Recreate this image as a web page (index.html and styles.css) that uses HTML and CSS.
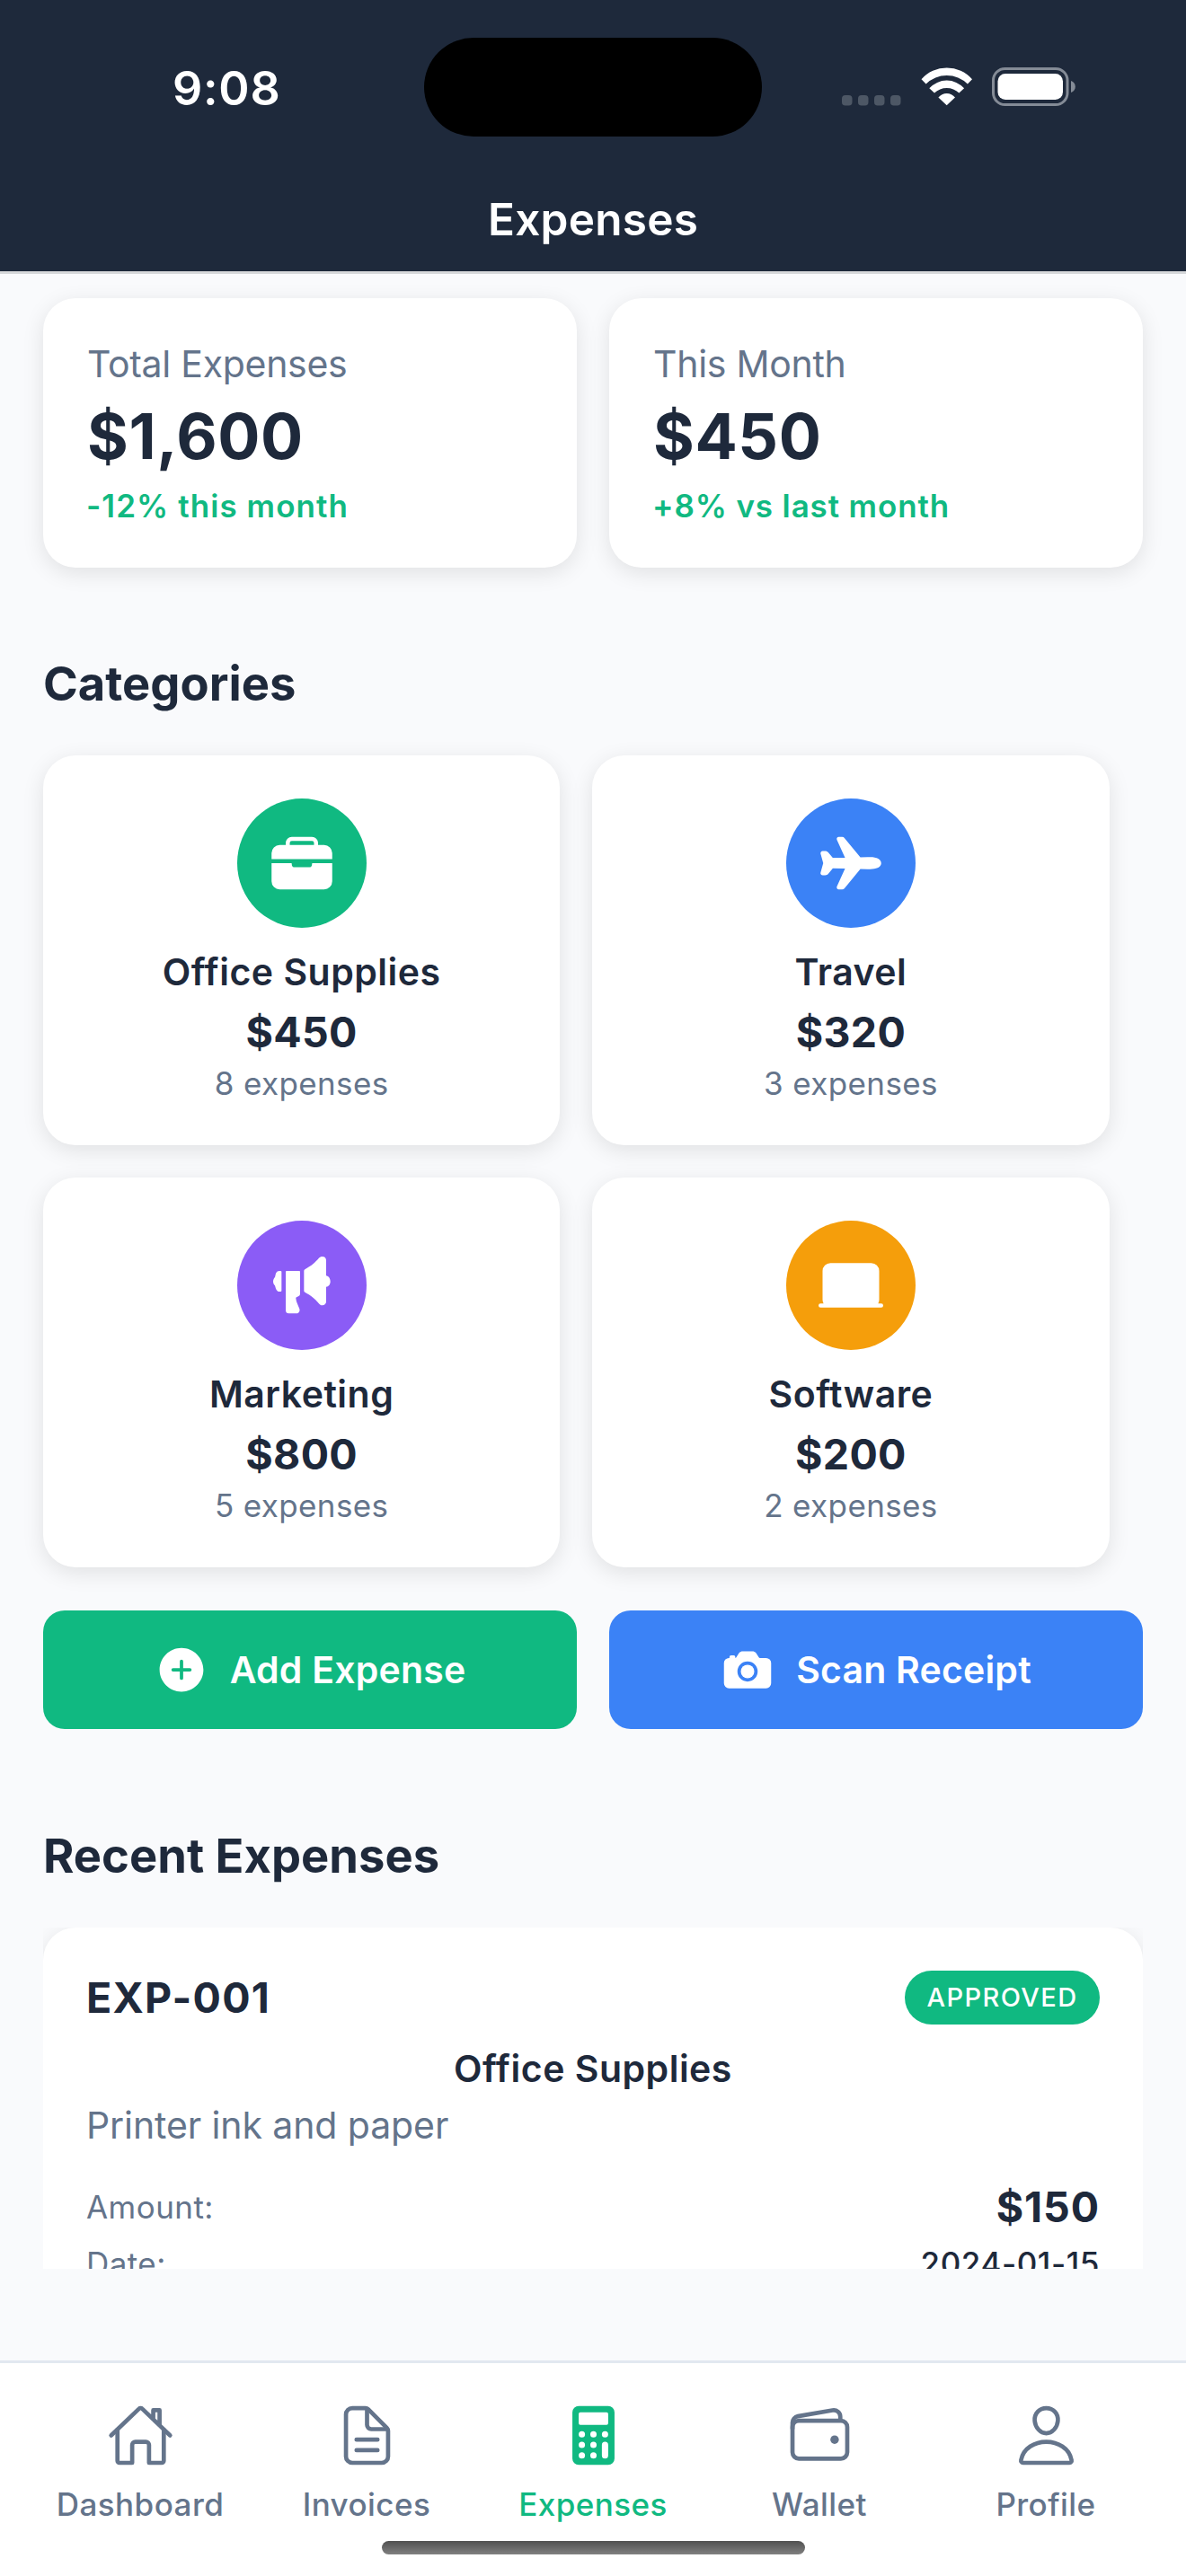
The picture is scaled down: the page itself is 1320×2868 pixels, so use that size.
FILE: index.html
```html
<!DOCTYPE html>
<html lang="en">
<head>
<meta charset="utf-8">
<title>Expenses</title>
<link rel="stylesheet" href="styles.css">
</head>
<body>
<header class="header">
  <div class="status">
    <span class="status-time">9:08</span>
    <span class="island"></span>
    <div class="status-icons">
      <svg class="signal" width="66" height="44" viewBox="0 0 66 44" fill="#4d5765"><rect y="31" width="11.5" height="11.5" rx="3.8"/><rect x="18" y="31" width="11.5" height="11.5" rx="3.8"/><rect x="36" y="31" width="11.5" height="11.5" rx="3.8"/><rect x="54" y="31" width="11.5" height="11.5" rx="3.8"/></svg>
      <svg class="wifi" width="58" height="44" viewBox="0 0 58 44" fill="#fff"><path d="M.5 13.3A37.5 37.5 0 0 1 57 13.3L51.9 18.5A32.8 32.8 0 0 0 5.6 18.5Z"/><path d="M9.3 23.3A26 26 0 0 1 48.1 23.3L42.4 28.6A19.6 19.6 0 0 0 15 28.6Z"/><path d="M19.4 33.6A11.7 11.7 0 0 1 38 33.6L28.7 42.2Z"/></svg>
      <svg class="battery" width="94" height="44" viewBox="0 0 94 44"><rect x="1.5" y="1.5" width="82.5" height="40" rx="13" fill="none" stroke="#848b96" stroke-width="3"/><rect x="6.5" y="7" width="72.5" height="29" rx="8.5" fill="#fff"/><path d="M88 15c3 1 4.8 3.500 4.800 6.500S91 27 88 28z" fill="#848b96"/></svg>
    </div>
  </div>
  <h1 class="header-title">Expenses</h1>
</header>

<main class="content">
  <section class="stats">
    <div class="card stat">
      <div class="stat-label">Total Expenses</div>
      <div class="stat-value">$1,600</div>
      <div class="stat-change">-12% this month</div>
    </div>
    <div class="card stat">
      <div class="stat-label">This Month</div>
      <div class="stat-value">$450</div>
      <div class="stat-change stat-change-up">+8% vs last month</div>
    </div>
  </section>

  <h2 class="section-title">Categories</h2>
  <section class="categories">
    <div class="card category">
      <div class="category-icon green">
        <svg viewBox="0 0 512 512" fill="#fff"><path d="M496 176a64.070 64.070 0 0 0-64-64h-48V96a48.050 48.050 0 0 0-48-48H176a48.050 48.050 0 0 0-48 48v16H80a64.070 64.070 0 0 0-64 64v48h480zm-144-64H160V96a16 16 0 0 1 16-16h160a16 16 0 0 1 16 16zM336 264a24 24 0 0 1-24 24H200a24 24 0 0 1-24-24v-4a4 4 0 0 0-4-4H16v144a64 64 0 0 0 64 64h352a64 64 0 0 0 64-64V256H340a4 4 0 0 0-4 4z"/></svg>
      </div>
      <div class="category-name">Office Supplies</div>
      <div class="category-amount">$450</div>
      <div class="category-count">8 expenses</div>
    </div>
    <div class="card category">
      <div class="category-icon blue">
        <svg viewBox="0 0 512 512" fill="#fff"><path d="M186.620 464H160a16 16 0 0 1-14.570-22.600l64.460-142.250L113.100 297l-35.300 42.770C71.070 348.230 65.700 352 52 352H34.080a17.660 17.660 0 0 1-14.700-7.060c-2.380-3.210-4.720-8.650-2.440-16.410l19.820-71c.15-.53.33-1.060.53-1.580a.38.38 0 0 0 0-.15 14.820 14.820 0 0 1-.53-1.590l-19.840-71.450c-2.150-7.610.2-12.930 2.560-16.060a16.830 16.830 0 0 1 13.600-6.700H52c10.230 0 20.160 4.590 26 12l34.570 42.050 97.320-1.440-64.440-142A16 16 0 0 1 160 48h26.910a25 25 0 0 1 19.350 9.800l125.050 152 57.770-1.520c4.230-.23 15.950-.31 18.660-.31C463 208 496 225.940 496 256c0 9.460-3.780 27-29.070 38.160-14.930 6.600-34.850 9.940-59.210 9.940-2.680 0-14.370-.08-18.660-.31l-57.760-1.540-125.360 152a25 25 0 0 1-19.320 9.750z"/></svg>
      </div>
      <div class="category-name">Travel</div>
      <div class="category-amount">$320</div>
      <div class="category-count">3 expenses</div>
    </div>
    <div class="card category">
      <div class="category-icon purple">
        <svg viewBox="42 42 216 216" fill="#fff"><path d="M82 105a3 3 0 0 0-3-3h-4c-5 0-9 2-12 8l-3 13c-3 3-6 8-6 14s3 11 6 14l3 10c3 7 7 10 12 10h4a3 3 0 0 0 3-3z"/><path d="M99 102h42a3 3 0 0 1 3 3v73c0 5-2 7-6 9l-6 3c-2 1-2 2-2 4 1 13 8 22 12 35 2 8-2 15-9 15h-27c-6 0-10-4-10-10V105a3 3 0 0 1 3-3z"/><path d="M157 102c0-2 1-4 3-5 21-12 34-23 46-37 4-4 8-6 12-6 8 0 13 5 13 12v52c8 1 14 9 14 19s-6 17-14 18v50c0 7-5 12-13 12-5 0-8-2-12-7-12-15-25-26-46-37-2-1-3-2-3-4z"/></svg>
      </div>
      <div class="category-name">Marketing</div>
      <div class="category-amount">$800</div>
      <div class="category-count">5 expenses</div>
    </div>
    <div class="card category">
      <div class="category-icon amber">
        <svg viewBox="0 0 512 512" fill="#fff"><path d="M496 400h-23.820A63.840 63.840 0 0 0 480 369.550v-227.100A62.520 62.520 0 0 0 417.550 80H94.450A62.520 62.520 0 0 0 32 142.450v227.100A63.840 63.840 0 0 0 39.820 400H16a16 16 0 0 0 0 32h480a16 16 0 0 0 0-32z"/></svg>
      </div>
      <div class="category-name">Software</div>
      <div class="category-amount">$200</div>
      <div class="category-count">2 expenses</div>
    </div>
  </section>

  <section class="actions">
    <button class="action green">
      <svg viewBox="0 0 512 512" fill="#fff"><path d="M256 48C141.310 48 48 141.310 48 256s93.310 208 208 208 208-93.310 208-208S370.690 48 256 48zm80 224h-64v64a16 16 0 0 1-32 0v-64h-64a16 16 0 0 1 0-32h64v-64a16 16 0 0 1 32 0v64h64a16 16 0 0 1 0 32z"/></svg>
      <span>Add Expense</span>
    </button>
    <button class="action blue">
      <svg viewBox="0 0 512 512" fill="#fff"><circle cx="256" cy="272" r="64"/><path d="M432 144h-59c-3 0-6.720-1.940-9.620-5l-25.940-40.940a15.520 15.520 0 0 0-1.370-1.850C327.110 85.760 315 80 302 80h-92c-13 0-25.110 5.760-34.070 16.210a15.520 15.520 0 0 0-1.370 1.850l-25.940 41c-2.220 2.420-5.340 5-8.620 5v-8a16 16 0 0 0-16-16h-24a16 16 0 0 0-16 16v8h-4a48.050 48.050 0 0 0-48 48V384a48.050 48.050 0 0 0 48 48h352a48.050 48.050 0 0 0 48-48V192a48.050 48.050 0 0 0-48-48zM256 368a96 96 0 1 1 96-96 96.110 96.110 0 0 1-96 96z"/></svg>
      <span>Scan Receipt</span>
    </button>
  </section>

  <h2 class="section-title recent-title">Recent Expenses</h2>
  <section class="expense-list">
    <article class="card expense">
      <div class="expense-head">
        <span class="expense-id">EXP-001</span>
        <span class="badge">APPROVED</span>
      </div>
      <div class="expense-category">Office Supplies</div>
      <div class="expense-note">Printer ink and paper</div>
      <div class="expense-row">
        <span class="row-label">Amount:</span>
        <span class="row-amount">$150</span>
      </div>
      <div class="expense-row date-row">
        <span class="row-label">Date:</span>
        <span class="row-date">2024-01-15</span>
      </div>
    </article>
  </section>
</main>

<nav class="tabs">
  <a class="tab">
    <svg viewBox="0 0 512 512" fill="none" stroke="currentColor" stroke-width="32" stroke-linecap="round" stroke-linejoin="round"><path d="M80 212v236a16 16 0 0 0 16 16h96V328a24 24 0 0 1 24-24h80a24 24 0 0 1 24 24v136h96a16 16 0 0 0 16-16V212"/><path d="M480 256L266.890 52c-5-5.280-16.690-5.340-21.780 0L32 256M400 179V64h-48v69"/></svg>
    <span>Dashboard</span>
  </a>
  <a class="tab">
    <svg viewBox="0 0 512 512" fill="none" stroke="currentColor" stroke-width="32" stroke-linecap="round" stroke-linejoin="round"><path d="M416 221.250V416a48 48 0 0 1-48 48H144a48 48 0 0 1-48-48V96a48 48 0 0 1 48-48h98.750a32 32 0 0 1 22.620 9.370l141.260 141.260a32 32 0 0 1 9.370 22.620z"/><path d="M256 56v120a32 32 0 0 0 32 32h120M176 288h160M176 368h160"/></svg>
    <span>Invoices</span>
  </a>
  <a class="tab tab-active">
    <svg viewBox="0 0 512 512" fill="currentColor"><path fill-rule="evenodd" d="M144 32h224a48 48 0 0 1 48 48v352a48 48 0 0 1-48 48H144a48 48 0 0 1-48-48V80a48 48 0 0 1 48-48zM156 80a12 12 0 0 0-12 12v72a12 12 0 0 0 12 12h200a12 12 0 0 0 12-12V92a12 12 0 0 0-12-12zM144 248a24 24 0 1 0 48 0 24 24 0 1 0-48 0zM232 248a24 24 0 1 0 48 0 24 24 0 1 0-48 0zM320 248a24 24 0 1 0 48 0 24 24 0 1 0-48 0zM144 328a24 24 0 1 0 48 0 24 24 0 1 0-48 0zM232 328a24 24 0 1 0 48 0 24 24 0 1 0-48 0zM144 408a24 24 0 1 0 48 0 24 24 0 1 0-48 0zM232 408a24 24 0 1 0 48 0 24 24 0 1 0-48 0zM320 328v80a24 24 0 0 0 48 0v-80a24 24 0 0 0-48 0z"/></svg>
    <span>Expenses</span>
  </a>
  <a class="tab">
    <svg viewBox="0 0 512 512" fill="none" stroke="currentColor" stroke-width="32" stroke-linejoin="round"><rect x="48" y="144" width="416" height="288" rx="48" ry="48"/><path d="M411.360 144v-30A50 50 0 0 0 352 64.900L88.640 109.850A50 50 0 0 0 48 159v49"/><circle cx="368" cy="288" r="32" fill="currentColor" stroke="none"/></svg>
    <span>Wallet</span>
  </a>
  <a class="tab">
    <svg viewBox="0 0 512 512" fill="none" stroke="currentColor" stroke-width="32" stroke-linecap="round" stroke-linejoin="round"><path d="M344 144c-3.920 52.870-44 96-88 96s-84.150-43.120-88-96c-4-55 35-96 88-96s92 42 88 96z"/><path d="M256 304c-87 0-175.300 48-191.640 138.600C62.390 453.520 68.570 464 80 464h352c11.440 0 17.620-10.480 15.650-21.400C431.300 352 343 304 256 304z"/></svg>
    <span>Profile</span>
  </a>
  <div class="home-indicator"></div>
</nav>
</body>
</html>
```
FILE: styles.css
```css
* {
  box-sizing: border-box;
}

body {
  margin: 0;
  width: 1320px;
  height: 2868px;
  display: flex;
  flex-direction: column;
  overflow: hidden;
  background: #f9fafc;
  color: #1e293b;
  font-family: Inter, "Liberation Sans", sans-serif;
}

svg {
  display: block;
}

h1,
h2 {
  margin: 0;
}

.green { background: #10b981; }
.blue { background: #3b82f6; }
.purple { background: #8b5cf6; }
.amber { background: #f59e0b; }

/* Header */
.header {
  height: 305px;
  flex: none;
  padding-top: 42px;
  background: #1e293b;
  border-bottom: 3px solid #d6d8da;
  color: #fff;
}

.status {
  display: grid;
  grid-template-columns: 1fr 376px 1fr;
  height: 110px;
}

.status-time {
  align-self: center;
  padding: 3px 0 0 192px;
  font-size: 52px;
  font-weight: 600;
  line-height: 60px;
  letter-spacing: 0.75px;
}

.island {
  border-radius: 55px;
  background: #000;
}

.status-icons {
  display: flex;
  align-items: center;
  padding-left: 89px;
}

.wifi {
  margin-left: 22px;
}

.battery {
  margin-left: 21px;
}

.header-title {
  margin-top: 62px;
  text-align: center;
  font-size: 49.5px;
  font-weight: 600;
  line-height: 60px;
  letter-spacing: 0.24px;
}

/* Scrolling content */
.content {
  flex: 1;
  padding: 27px 48px 0;
}

.card {
  background: #fff;
  border-radius: 36px;
  box-shadow: 0 6px 24px rgba(0, 0, 0, 0.1);
}

.stats {
  display: grid;
  grid-template-columns: 1fr 1fr;
  gap: 36px;
}

.stat {
  height: 300px;
  padding: 48px;
}

.stat-label {
  font-size: 41px;
  line-height: 50px;
  letter-spacing: -0.28px;
  padding-left: 1px;
  color: #64748b;
}

.stat-value {
  margin: 13px 0;
  padding-left: 1px;
  font-size: 70px;
  font-weight: 700;
  line-height: 86px;
  letter-spacing: 0.6px;
}

.stat-change {
  font-size: 35px;
  font-weight: 600;
  line-height: 42px;
  letter-spacing: 1.07px;
  color: #10b981;
}

.stat-change-up {
  letter-spacing: 0.87px;
}

.section-title {
  margin: 96px 0 47px;
  font-size: 52.5px;
  font-weight: 700;
  line-height: 66px;
}

.recent-title {
  margin-top: 108px;
}

/* Categories */
.categories {
  display: grid;
  grid-template-columns: 575.3px 575.3px;
  gap: 36px;
}

.category {
  display: flex;
  flex-direction: column;
  align-items: center;
  height: 434px;
  padding: 48px;
}

.category-icon {
  display: grid;
  place-items: center;
  width: 144px;
  height: 144px;
  border-radius: 50%;
}

.category-icon svg {
  width: 72px;
  height: 72px;
}

.category-name {
  margin-top: 24px;
  font-size: 41px;
  font-weight: 600;
  line-height: 50px;
  letter-spacing: 0.5px;
}

.category-amount {
  margin-top: 13px;
  font-size: 46.5px;
  font-weight: 700;
  line-height: 58px;
  letter-spacing: 0.3px;
}

.category-count {
  margin-top: 7px;
  font-size: 35px;
  line-height: 42px;
  letter-spacing: 0.38px;
  color: #64748b;
}

/* Action buttons */
.actions {
  display: grid;
  grid-template-columns: 1fr 1fr;
  gap: 36px;
  margin-top: 48px;
}

.action {
  display: flex;
  align-items: center;
  justify-content: center;
  gap: 24px;
  height: 132px;
  padding: 0;
  border: 0;
  border-radius: 24px;
  color: #fff;
  font: 600 41px/50px Inter, "Liberation Sans", sans-serif;
  letter-spacing: 0.2px;
}

.action svg {
  width: 60px;
  height: 60px;
}

/* Recent expenses */
.expense-list {
  height: 380px;
  overflow: hidden;
}

.expense {
  height: 520px;
  padding: 48px;
}

.expense-head,
.expense-row {
  display: flex;
  align-items: center;
  justify-content: space-between;
}

.expense-id {
  font-size: 46.5px;
  font-weight: 700;
  line-height: 58px;
  letter-spacing: 1.27px;
}

.badge {
  width: 217px;
  height: 60px;
  border-radius: 30px;
  background: #10b981;
  color: #fff;
  text-align: center;
  font-size: 29px;
  font-weight: 500;
  line-height: 60px;
  letter-spacing: 1.43px;
}

.expense-category {
  margin-top: 24px;
  text-align: center;
  font-size: 41px;
  font-weight: 600;
  line-height: 50px;
  letter-spacing: 0.5px;
}

.expense-note {
  margin: 13px 0 37px;
  font-size: 41px;
  line-height: 50px;
  letter-spacing: -0.1px;
  color: #64748b;
}

.date-row {
  margin-top: 13px;
}

.row-label {
  font-size: 35px;
  line-height: 42px;
  letter-spacing: 0.45px;
  color: #64748b;
}

.row-amount {
  font-size: 46.5px;
  font-weight: 700;
  line-height: 58px;
  letter-spacing: 0.93px;
}

.row-date {
  font-size: 35px;
  font-weight: 500;
  line-height: 42px;
  letter-spacing: 0.57px;
}

/* Tab bar */
.tabs {
  position: relative;
  display: grid;
  grid-template-columns: repeat(5, 252px);
  flex: none;
  height: 240px;
  padding: 43px 30px 0;
  border-top: 3px solid #e2e8f0;
  background: #fff;
}

.tab {
  display: flex;
  flex-direction: column;
  align-items: center;
  gap: 18px;
  color: #64748b;
  font-size: 35px;
  font-weight: 500;
  line-height: 42px;
  letter-spacing: 0.45px;
}

.tab svg {
  width: 75px;
  height: 75px;
}

.tab-active {
  color: #10b981;
}

.home-indicator {
  position: absolute;
  left: 425px;
  bottom: 24px;
  width: 471px;
  height: 15px;
  border-radius: 8px;
  background: linear-gradient(#505050, #808080);
}
```
